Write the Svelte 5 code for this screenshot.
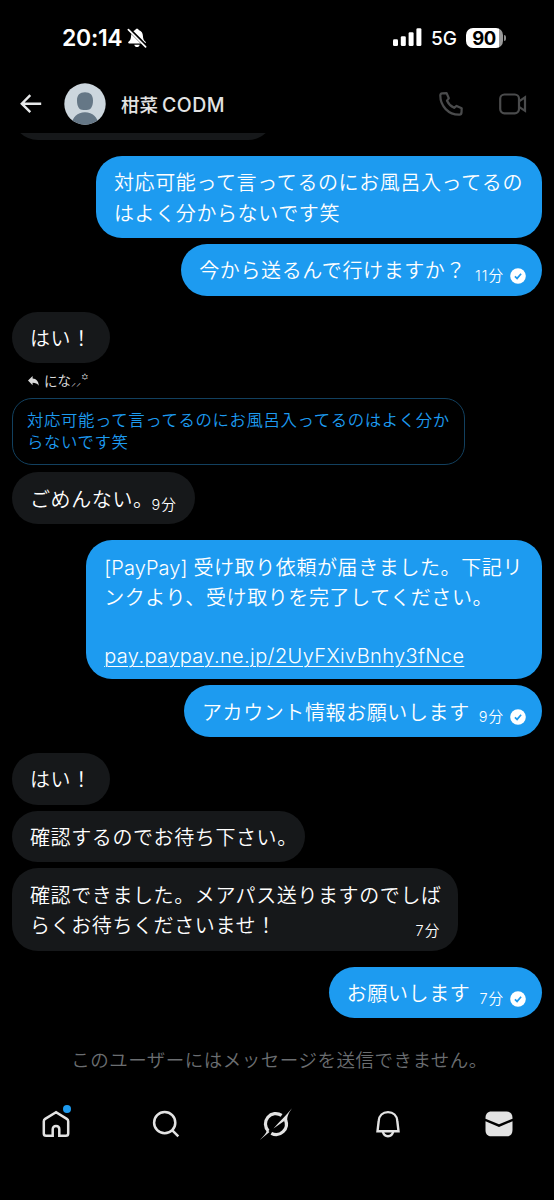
<script>
    const messages = [
        { mine: true, first: true, lines: ["対応可能って言ってるのにお風呂入ってるの", "はよく分からないです笑"] },
        { mine: true, lines: ["今から送るんで行けますか？"], time: "11分" },
        { first: true, lines: ["はい！"] },
        {
            reply: true,
            quote: ["対応可能って言ってるのにお風呂入ってるのはよく分か", "らないです笑"],
            lines: ["ごめんない。"],
            time: "9分",
        },
        {
            mine: true,
            first: true,
            prefix: "[PayPay] ",
            lines: ["受け取り依頼が届きました。下記リ", "ンクより、受け取りを完了してください。"],
            link: "pay.paypay.ne.jp/2UyFXivBnhy3fNce",
        },
        { mine: true, lines: ["アカウント情報お願いします"], time: "9分" },
        { first: true, lines: ["はい！"] },
        { lines: ["確認するのでお待ち下さい。"] },
        { lines: ["確認できました。メアパス送りますのでしば", "らくお待ちくださいませ！"], time: "7分" },
        { mine: true, first: true, lines: ["お願いします"], time: "7分" },
    ];

    // a closing 。 only takes half of its width
    const trimmed = (m) => m.lines.length === 1 && m.lines[0].endsWith("。");
</script>

<div class="phone">
    <div class="status">
        <div class="clock">
            <span>20:14</span>
            <svg width="20" height="20" viewBox="0 0 20 20">
                <path
                    d="M10 .8c-.9 0-1.500.5-1.700 1.200C5.400 2.800 4.200 5.200 4.100 7.800c-.1 3.200-.9 4.600-2.600 6-.6.600-.3 1.800.8 1.800h15.400c1.100 0 1.400-1.200.8-1.800-1.700-1.400-2.500-2.800-2.600-6-.1-2.600-1.300-5-4.200-5.800C11.500 1.300 10.900.8 10 .8zM7.300 16.800c.3 1.500 1.400 2.300 2.700 2.300s2.400-.8 2.700-2.300z"
                    fill="#fff"
                />
                <path d="M1.600 .8l17.600 17.600" stroke="#000" stroke-width="3.600" />
                <path d="M1.400 1.600l17.200 17.200" stroke="#fff" stroke-width="1.700" stroke-linecap="round" />
            </svg>
        </div>
        <div class="signal">
            <svg width="30" height="19" viewBox="0 0 30 19" fill="#fff">
                <rect x="0" y="11.300" width="5" height="6.700" rx="1.300" />
                <rect x="7.800" y="8.300" width="5" height="9.700" rx="1.300" />
                <rect x="15.600" y="4.300" width="5" height="13.700" rx="1.300" />
                <rect x="23.400" y="0.300" width="5" height="17.700" rx="1.300" />
            </svg>
            <span class="net">5G</span>
            <div class="battery">90</div>
            <div class="tip"></div>
        </div>
    </div>

    <header>
        <svg class="back" width="22" height="20" viewBox="0 0 22 20" fill="none" stroke="#e7e9ea" stroke-width="2.400">
            <path d="M10.300 1.200L1.800 9.700l8.500 8.500M2 9.700h19.200" />
        </svg>
        <svg class="avatar" width="42" height="42" viewBox="0 0 42 42">
            <clipPath id="round"><circle cx="21" cy="21" r="20.700" /></clipPath>
            <g clip-path="url(#round)">
                <rect width="42" height="42" fill="#ccd6dd" />
                <path
                    d="M21 9.200c5.300 0 8 2.800 8 8.300 0 5.800-2 8.800-4.800 9.200-2 .3-4.400.3-6.400 0-2.800-.4-4.800-3.400-4.800-9.200 0-5.500 2.700-8.300 8-8.300z"
                    fill="#657786"
                />
                <path d="M7.500 42c.8-8 5.800-12.800 13.500-12.800S33.700 34 34.500 42z" fill="#657786" />
            </g>
        </svg>
        <span class="name">柑菜<span class="latin">CODM</span></span>
        <svg class="call" width="24" height="24" viewBox="0 0 24 24" fill="none" stroke="#4a4b4c" stroke-width="2.200">
            <path
                d="M3.200 1.300L7.600 1.100 9.800 6.300 8 8.700c1.500 3.200 3.800 5.600 7.100 7.100l2.500-1.900 5.100 2.300-.2 4.500c-.1 1.300-.8 1.900-2 2C9.400 23 1.200 14 1.300 3.400c0-1.200.7-2 1.900-2.100z"
                stroke-linejoin="round"
            />
        </svg>
        <svg width="28" height="22" viewBox="0 0 28 22" fill="none" stroke="#4a4b4c" stroke-width="2.200">
            <rect x="1.200" y="1.500" width="18.800" height="18.800" rx="4.200" />
            <path d="M20 8.300l6-4v13.500l-6-4" />
        </svg>
    </header>

    <main>
        <div class="bubble cut"></div>
        {#each messages as m}
            {#if m.reply}
                <div class="reply">
                    <svg width="11" height="10" viewBox="0 0 11 10" fill="#d9d9d9">
                        <path d="M4.600 0v2.500C8.300 2.700 10.500 5 10.800 9.700 9.300 7.400 7.500 6.700 4.600 6.700v2.500L0 4.600z" />
                    </svg>
                    <span>にな<small>⸝⸝</small><sup>꙳</sup></span>
                </div>
                <div class="quote">
                    {#each m.quote as line}
                        <div>{line}</div>
                    {/each}
                </div>
            {/if}
            <div class="bubble" class:mine={m.mine} class:first={m.first}>
                <div class="text" class:trimmed={trimmed(m)}>
                    {#each m.lines as line, i}
                        <div class="line">{#if i === 0 && m.prefix}<span class="prefix">{m.prefix}</span>{/if}{line}</div>
                    {/each}
                    {#if m.link}
                        <div class="line link"><span>{m.link}</span></div>
                    {/if}
                </div>
                {#if m.time}
                    <div class="meta" class:tucked={m.lines.length > 1}>
                        <span>{m.time}</span>
                        {#if m.mine}
                            <svg width="16" height="16" viewBox="0 0 16 16">
                                <circle cx="8" cy="8" r="7.800" fill="#fff" />
                                <path d="M4.900 8.300l2.200 2.100 4-4.600" fill="none" stroke="#1d9bf0" stroke-width="1.700" />
                            </svg>
                        {/if}
                    </div>
                {/if}
            </div>
        {/each}
    </main>

    <p class="notice">このユーザーにはメッセージを送信できません。</p>

    <nav>
        <div class="home">
            <svg width="28" height="28" viewBox="0 0 28 28" fill="none" stroke="#e3e3e3" stroke-width="2.500">
                <path
                    d="M14 2.200L3.200 8.900c-.9.600-1.400 1.300-1.400 2.300v12.200c0 1.500.8 2.300 2.300 2.300h6.600v-6.400c0-2 1.300-3.300 3.300-3.300s3.300 1.300 3.300 3.300v6.400h6.600c1.500 0 2.300-.8 2.300-2.300V11.200c0-1-.5-1.700-1.400-2.300z"
                />
            </svg>
            <i class="dot"></i>
        </div>
        <svg width="28" height="28" viewBox="0 0 28 28" fill="none" stroke="#e3e3e3" stroke-width="2.500">
            <circle cx="12.700" cy="12.700" r="10.600" />
            <path d="M20.300 20.300l6 6" />
        </svg>
        <svg class="grok" width="34" height="34" viewBox="0 0 34 34" fill="#e3e3e3">
            <g fill="none" stroke="#e3e3e3" stroke-width="3.200">
                <path d="M22.600 8.400A10.300 10.300 0 0 0 9.300 24" />
                <path d="M26.500 13A10.300 10.300 0 0 1 12.300 26.300" />
            </g>
            <path d="M33 1.200C28 7.500 21 14 14.500 21.500L25.600 13.800 28.300 14.500C27.800 9 29.800 6 33 1.200z" />
            <path d="M8 22.800L10.500 25 .8 33C4 29.500 7.500 26.500 8 22.800z" />
        </svg>
        <svg class="bell" width="26" height="28" viewBox="0 0 26 28" fill="none" stroke="#e3e3e3" stroke-width="2.400">
            <path d="M13 2.100c-5.300 0-8.900 3.500-9.300 8.800L2.500 21.200h21L22.300 10.900C21.900 5.600 18.300 2.100 13 2.100z" />
            <path d="M7.800 21.500c.7 3 2.500 4.700 5.200 4.700s4.500-1.700 5.200-4.700" />
        </svg>
        <svg width="28" height="26" viewBox="0 0 28 26" fill="#e3e3e3">
            <path d="M.5 7C.5 3 2.500.5 6.500.5h15c4 0 6 2.500 6 6.500v.7L14 13.200.5 7.700z" />
            <path d="M.5 10.300L14 16l13.500-5.700V19c0 4-2 6.300-6 6.300h-15c-4 0-6-2.300-6-6.300z" />
        </svg>
    </nav>
</div>

<style>
    :global(body) {
        margin: 0;
        background: #000;
    }
    .phone {
        width: 554px;
        height: 1200px;
        overflow: hidden;
        background: #000;
        color: #fff;
        display: flex;
        flex-direction: column;
        font-family: Inter, "Noto Sans CJK JP", sans-serif;
    }
    svg {
        display: block;
        flex: none;
    }
    .status {
        height: 75px;
        box-sizing: border-box;
        padding: 0 48px 0 62px;
        display: flex;
        align-items: center;
        justify-content: space-between;
    }
    .clock {
        display: flex;
        align-items: center;
        gap: 5px;
        font-size: 23px;
        font-weight: 600;
    }
    .clock span {
        width: 60px;
        white-space: nowrap;
        letter-spacing: -0.3px;
    }
    .signal {
        display: flex;
        align-items: center;
    }
    .net {
        font-size: 19px;
        font-weight: 500;
        margin: 1px 9px 0 8px;
    }
    .battery {
        width: 37px;
        height: 20px;
        border-radius: 7px;
        background: linear-gradient(90deg, #fff 33px, #9a9a9a 33px);
        color: #000;
        font-size: 18.500px;
        line-height: 21px;
        font-weight: 700;
        letter-spacing: -0.5px;
        text-indent: -1px;
        text-align: center;
    }
    .tip {
        width: 2px;
        height: 6px;
        margin-left: 1px;
        border-radius: 0 3px 3px 0;
        background: #8c8c8c;
    }
    header {
        height: 57.500px;
        box-sizing: border-box;
        padding: 0 27px 0 20px;
        display: flex;
        align-items: center;
    }
    .avatar {
        margin: 0 15px 0 22px;
    }
    .name {
        flex: 1;
        font-size: 18.500px;
        font-weight: 500;
        color: #e3e3e3;
    }
    .latin {
        margin-left: 4px;
        font-size: 19.500px;
        letter-spacing: 0.500px;
    }
    .call {
        margin-right: 36px;
    }
    main {
        height: 896px;
        overflow: hidden;
        padding: 0 12px;
        display: flex;
        flex-direction: column;
        align-items: flex-start;
    }
    .bubble {
        flex: none;
        box-sizing: border-box;
        margin-top: 6px;
        padding: 12.500px 18px 8.500px;
        border-radius: 26px;
        background: #16181a;
        display: flex;
        align-items: flex-end;
        font-size: 20px;
        letter-spacing: 0.600px;
        line-height: 30.700px;
        font-weight: 350;
    }
    .bubble.first {
        margin-top: 16px;
    }
    .bubble.mine {
        align-self: flex-end;
        padding-right: 19px;
        background: #1d9bf0;
    }
    .bubble.cut {
        width: 262px;
        height: 52px;
        margin-top: -45px;
    }
    .line {
        white-space: pre;
    }
    .trimmed {
        margin-right: -11px;
    }
    .prefix {
        letter-spacing: 0.100px;
    }
    .link {
        margin: 27px 0 -1px;
        letter-spacing: 0.380px;
        text-decoration: underline;
        text-decoration-thickness: 1px;
        text-underline-offset: 3px;
    }
    .meta {
        display: flex;
        align-items: center;
        gap: 6px;
        height: 18px;
        margin: 0 0 2px 9px;
        font-size: 14.500px;
        letter-spacing: 1px;
        line-height: 18px;
    }
    .mine .meta {
        margin-right: -3px;
    }
    .meta.tucked {
        margin-left: -26px;
    }
    .reply {
        height: 34.500px;
        padding-left: 16px;
        display: flex;
        align-items: center;
        gap: 5px;
        font-size: 13.500px;
        color: #d9d9d9;
        line-height: 20px;
    }
    .reply small {
        font-size: 10px;
        line-height: 0;
    }
    .reply sup {
        font-size: 14px;
        line-height: 0;
        vertical-align: 2px;
    }
    .quote {
        box-sizing: border-box;
        height: 67px;
        padding: 11.500px 14px 10px;
        margin-bottom: 1.500px;
        border: 1px solid #12405f;
        border-radius: 20px;
        color: #1d9bf0;
        font-size: 16.400px;
        letter-spacing: 0.620px;
        line-height: 21.500px;
        white-space: nowrap;
        font-weight: 350;
    }
    .notice {
        margin: 17px 0 0;
        padding-left: 5px;
        text-align: center;
        font-size: 18.500px;
        letter-spacing: 0.500px;
        line-height: 28px;
        font-weight: 350;
        color: #6b6e71;
    }
    nav {
        display: flex;
        align-items: center;
        justify-content: space-between;
        height: 34px;
        margin-top: 33px;
        padding: 0 41px 0 42px;
    }
    .grok {
        margin: 0 3px 0 -3px;
    }
    .bell {
        margin: 0 2px 0 -2px;
    }
    .home {
        position: relative;
    }
    .dot {
        position: absolute;
        top: -5px;
        right: -1px;
        width: 8px;
        height: 8px;
        border-radius: 50%;
        background: #1d9bf0;
    }
</style>
